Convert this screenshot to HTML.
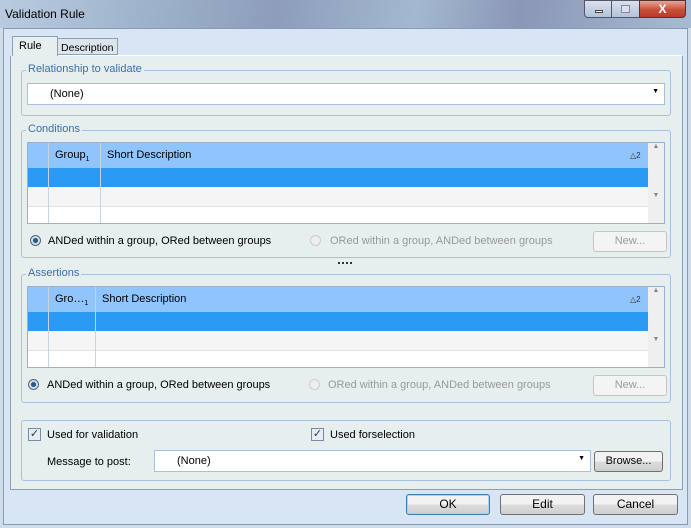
<!DOCTYPE html><html><head><style>
body{margin:0;width:691px;height:528px;overflow:hidden;font-family:"Liberation Sans",sans-serif;font-size:11px;position:relative;background:#cfdcea}
.a{position:absolute;box-sizing:border-box}
.title{left:0;top:0;width:691px;height:28px;background:linear-gradient(100deg,#b9cbe0 0%,#9fb4cc 20%,#8d9dba 40%,#a3b8d0 60%,#8a97b6 75%,#a6bbd3 100%)}
.grp{border:1px solid #a8c0dc;border-radius:3px}
.lbl{background:#e6eeee;color:#3d6dad;padding:0 2px;font-size:11px}
.btn{border:1px solid #707070;border-radius:3px;background:linear-gradient(#f2f2f2 50%,#dcdcdc 50%,#cfcfcf);text-align:center;font-size:12px;line-height:19px}
.dis{border-color:#c5c5c5;background:#f4f4f4;color:#9a9a9a;font-size:11px}
.cb{width:13px;height:13px;border:1px solid #7a8aa0;background:#e6ecf3;font-size:11px;line-height:11px;text-align:center;color:#334}
</style></head><body>
<div class="a title"></div>
<div class="a" style="left:5px;top:7px;font-size:12px;color:#000">Validation Rule</div>
<div class="a" style="left:584px;top:0;width:28px;height:18px;border:1px solid #556;border-radius:0 0 0 4px;background:linear-gradient(#d8e1ee,#b2c2d8)"></div>
<div class="a" style="left:595px;top:10px;width:8px;height:3px;background:#fff;border:1px solid #444"></div>
<div class="a" style="left:611px;top:0;width:29px;height:18px;border:1px solid #556;background:linear-gradient(#d8e1ee,#b2c2d8)"></div>
<div class="a" style="left:621px;top:5px;width:9px;height:8px;border:1px solid #889;background:#dde"></div>
<div class="a" style="left:639px;top:0;width:47px;height:18px;border:1px solid #533;border-radius:0 0 4px 0;background:linear-gradient(#e8a598,#c7503a 55%,#b93a26);color:#fff;font-weight:bold;text-align:center;font-size:12px;line-height:16px">X</div>
<div class="a" style="left:3px;top:28px;width:685px;height:497px;background:#d7e5f4;border:1px solid #8a9ab0"></div>
<div class="a" style="left:10px;top:55px;width:673px;height:435px;background:#e6eeee;border:1px solid #8e9fb2;border-top:1px solid #fff"></div>
<div class="a" style="left:12px;top:36px;width:46px;height:20px;background:#e6eeee;border:1px solid #8e9fb2;border-bottom:none;padding:3px 0 0 6px;font-size:11px">Rule</div>
<div class="a" style="left:57px;top:38px;width:61px;height:17px;background:#dde5ec;border:1px solid #8e9fb2;padding:3px 0 0 3px;font-size:10.5px">Description</div>

<div class="a grp" style="left:21px;top:70px;width:650px;height:46px"></div>
<div class="a lbl" style="left:26px;top:63px">Relationship to validate</div>
<div class="a" style="left:27px;top:83px;width:638px;height:22px;background:#fff;border:1px solid #abc0d8;padding:4px 0 0 22px;font-size:11px">(None)<span style="position:absolute;right:5px;top:4px;font-size:7px">▼</span></div>

<div class="a grp" style="left:21px;top:130px;width:650px;height:128px"></div>
<div class="a lbl" style="left:26px;top:123px">Conditions</div>
<div class="a" style="left:27px;top:142px;width:638px;height:82px;background:#fff;border:1px solid #9ab0cc"></div>
<div class="a" style="left:28px;top:143px;width:620px;height:25px;background:#90c4fc"></div>
<div class="a" style="left:28px;top:168px;width:620px;height:19px;background:#2a9af5"></div>
<div class="a" style="left:28px;top:187px;width:620px;height:20px;background:#f5f5f5;border-bottom:1px solid #e2e2e2"></div>
<div class="a" style="left:48px;top:143px;width:1px;height:80px;background:#c8d4e2"></div>
<div class="a" style="left:100px;top:143px;width:1px;height:80px;background:#c8d4e2"></div>
<div class="a" style="left:55px;top:149px;font-size:11px">Group<sub style="font-size:7px">1</sub></div>
<div class="a" style="left:107px;top:149px;font-size:11px">Short Description</div>
<div class="a" style="left:630px;top:151px;font-size:8px;color:#333">△2</div>
<div class="a" style="left:648px;top:143px;width:16px;height:80px;background:#efefef;font-size:7px;color:#888;text-align:center">▲<br><br><br><br><br><br><br>▼</div>
<div class="a" style="left:30px;top:235px;width:11px;height:11px;border-radius:50%;border:1px solid #567;background:radial-gradient(#2a5a8a 35%,#cfe0ef 45%)"></div>
<div class="a" style="left:48px;top:235px;font-size:11px">ANDed within a group, ORed between groups</div>
<div class="a" style="left:310px;top:235px;width:11px;height:11px;border-radius:50%;border:1px solid #ccc;background:#eee"></div>
<div class="a" style="left:330px;top:235px;font-size:11px;color:#999">ORed within a group, ANDed between groups</div>
<div class="a btn dis" style="left:593px;top:231px;width:74px;height:21px">New...</div>
<div class="a" style="left:338px;top:262px;width:14px;height:2px;border-top:2px dotted #333"></div>

<div class="a grp" style="left:21px;top:274px;width:650px;height:129px"></div>
<div class="a lbl" style="left:26px;top:267px">Assertions</div>
<div class="a" style="left:27px;top:286px;width:638px;height:82px;background:#fff;border:1px solid #9ab0cc"></div>
<div class="a" style="left:28px;top:287px;width:620px;height:25px;background:#90c4fc"></div>
<div class="a" style="left:28px;top:312px;width:620px;height:19px;background:#2a9af5"></div>
<div class="a" style="left:28px;top:331px;width:620px;height:20px;background:#f5f5f5;border-bottom:1px solid #e2e2e2"></div>
<div class="a" style="left:48px;top:287px;width:1px;height:80px;background:#c8d4e2"></div>
<div class="a" style="left:95px;top:287px;width:1px;height:80px;background:#c8d4e2"></div>
<div class="a" style="left:55px;top:293px;font-size:11px">Gro…<sub style="font-size:7px">1</sub></div>
<div class="a" style="left:102px;top:293px;font-size:11px">Short Description</div>
<div class="a" style="left:630px;top:295px;font-size:8px;color:#333">△2</div>
<div class="a" style="left:648px;top:287px;width:16px;height:80px;background:#efefef;font-size:7px;color:#888;text-align:center">▲<br><br><br><br><br><br><br>▼</div>
<div class="a" style="left:28px;top:379px;width:11px;height:11px;border-radius:50%;border:1px solid #567;background:radial-gradient(#2a5a8a 35%,#cfe0ef 45%)"></div>
<div class="a" style="left:47px;top:379px;font-size:11px">ANDed within a group, ORed between groups</div>
<div class="a" style="left:309px;top:379px;width:11px;height:11px;border-radius:50%;border:1px solid #ccc;background:#eee"></div>
<div class="a" style="left:328px;top:379px;font-size:11px;color:#999">ORed within a group, ANDed between groups</div>
<div class="a btn dis" style="left:593px;top:375px;width:74px;height:21px">New...</div>

<div class="a grp" style="left:21px;top:420px;width:650px;height:61px"></div>
<div class="a cb" style="left:28px;top:428px">✓</div>
<div class="a" style="left:47px;top:429px;font-size:11px">Used for validation</div>
<div class="a cb" style="left:311px;top:428px">✓</div>
<div class="a" style="left:330px;top:429px;font-size:11px">Used forselection</div>
<div class="a" style="left:47px;top:456px;font-size:11px">Message to post:</div>
<div class="a" style="left:154px;top:450px;width:437px;height:22px;background:#fff;border:1px solid #abc0d8;padding:4px 0 0 22px;font-size:11px">(None)<span style="position:absolute;right:5px;top:4px;font-size:7px">▼</span></div>
<div class="a btn" style="left:594px;top:451px;width:69px;height:21px;font-size:11px">Browse...</div>

<div class="a btn" style="left:406px;top:494px;width:84px;height:21px;border-color:#3c7fb1;box-shadow:inset 0 0 0 1px #9fd3f8">OK</div>
<div class="a btn" style="left:500px;top:494px;width:85px;height:21px">Edit</div>
<div class="a btn" style="left:593px;top:494px;width:85px;height:21px">Cancel</div>
</body></html>
